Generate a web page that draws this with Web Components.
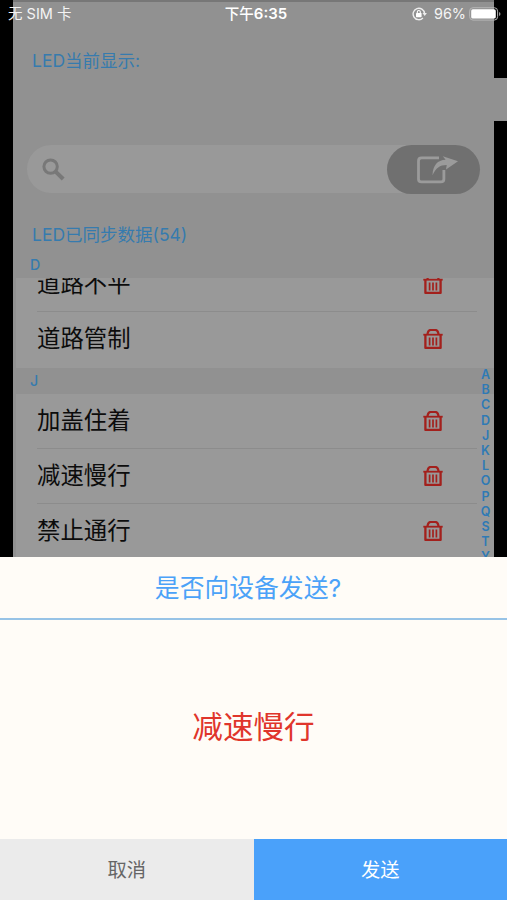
<!DOCTYPE html>
<html lang="zh-CN">
<head>
<meta charset="utf-8">
<title>LED</title>
<style>
html,body{margin:0;padding:0;width:507px;height:900px;overflow:hidden;background:#000;font-family:Inter,"Noto Sans CJK SC",sans-serif}
</style>
</head>
<body>
<led-app></led-app>
<script>
const define = (name, html, setup) => customElements.define(name, class extends HTMLElement {
  constructor() {
    super();
    this.attachShadow({mode: 'open'}).innerHTML = html;
  }
  connectedCallback() { if (setup) setup(this, this.shadowRoot); }
});

define('status-bar', `<style>
:host{position:absolute;inset:0 0 auto 0;height:28px;display:grid;grid-template-columns:1fr auto 1fr;align-items:center;padding:0 6px 0 8px;box-sizing:border-box;color:#f4f4f4;font-size:14.5px;line-height:28px;white-space:nowrap}
.time{font-weight:600;font-size:15px;color:#fff;padding-left:3px}
.time b{font-weight:500;font-size:14.5px}
.right{display:flex;align-items:center;justify-content:flex-end}
.pct{margin:0 3px 0 7px;font-size:14.4px}
svg{display:block;flex:none}
</style>
<span>无 SIM 卡</span><span class="time"><b>下午</b>6:35</span>
<span class="right">
<svg width="15" height="14" viewBox="0 0 15 14"><path d="M10.9 11A5.7 5.7 0 1 1 12.5 6.4" fill="none" stroke="#eee" stroke-width="1.4"/><path d="M10.5 6h4.4l-2.2 3z" fill="#eee"/><rect x="4" y="6" width="5.6" height="4.2" rx=".6" fill="#fff"/><path d="M5.3 6V5a1.5 1.5 0 0 1 3 0v1" fill="none" stroke="#fff" stroke-width="1.1"/></svg>
<span class="pct">96%</span>
<svg width="32" height="14" viewBox="0 0 32 14"><rect x=".6" y=".7" width="28" height="12.4" rx="3.4" fill="none" stroke="#b5b5b5" stroke-width="1"/><rect x="2.2" y="2.3" width="24.6" height="9.2" rx="1.6" fill="#fff"/><path d="M30 5v4q1.5-.5 1.5-2T30 5" fill="#999"/></svg>
</span>`);

define('trash-icon', `<style>:host{display:block;width:20px;height:21px}svg{display:block}</style>
<svg width="20" height="21" viewBox="0 0 20 21" fill="none" stroke="#a3201c"><path d="M.3 5.7h19.4" stroke-width="1.8"/><path d="M2.4 5.8v13.1h15.2V5.8" stroke-width="2.3" stroke-linejoin="round"/><path d="M4.6 5.3V4.4Q5.4 1 7.6 1h4.8q2.2 0 3 3.4v.9" stroke-width="2.2"/><path d="M6.6 8.4v8M10 8.4v8M13.4 8.4v8" stroke-width="1.7"/></svg>`);

define('message-row', `<style>
:host{display:block;height:55px;padding-left:21px;padding-right:17px;box-sizing:border-box;background:#999}
.in{height:100%;display:flex;align-items:center;justify-content:space-between;box-sizing:border-box;border-bottom:1px solid #8c8c8c;font-size:23.4px;line-height:54px;color:#0c0c0c;padding-right:34px}
:host([last]) .in{border-color:transparent}
</style><div class="in"><slot></slot><trash-icon></trash-icon></div>`);

define('section-head', `<style>
:host{display:block;height:26px;line-height:26px;padding-left:14px;background:#919191;color:#367bae;font-size:14.2px;font-weight:500}
</style><slot></slot>`);

define('search-bar', `<style>
:host{display:flex;height:48px;margin:0 14px 0 14px;border-radius:24px;background:#999;justify-content:space-between;align-items:center}
.go{width:93px;height:49px;border-radius:25px;background:#707070;display:flex;align-items:center;justify-content:center}
.find{margin-left:15px}
svg{display:block}
.go svg{margin-left:6px}
</style>
<svg class="find" width="23" height="23" viewBox="0 0 23 23" fill="none" stroke="#787878"><circle cx="8.6" cy="8.6" r="6.7" stroke-width="3"/><path d="m13.6 13.6 7.6 7.4" stroke-width="4"/></svg>
<span class="go"><svg width="44" height="30" viewBox="0 0 44 30"><path d="M24 3.9H6.5Q3.5 3.9 3.5 6.9v18q0 3 3 3h19.4q3 0 3-3v-9" fill="none" stroke="#9b9b9b" stroke-width="2.8"/><path d="M17.5 21.2C18 11 22.5 6.2 30.6 5.8L27.8 2.2 43 7.2 31 15.6l.7-4.6C24.6 11 21 14 17.5 21.2z" fill="#9b9b9b"/></svg></span>`);

define('letter-index', `<style>
:host{position:absolute;left:477px;top:367px;width:17px;height:190px;overflow:hidden;display:flex;flex-direction:column;align-items:center;color:#2f7ab5;font-size:12.5px;font-weight:600}
span{flex:none;height:15.2px;line-height:15.2px}
</style>`, (el, root) => {
  for (const c of 'ABCDJKLOPQSTY') {
    const s = document.createElement('span');
    s.textContent = c;
    root.append(s);
  }
});

define('led-screen', `<style>
:host{display:block;width:481px;height:557px;margin-left:13px;overflow:hidden;background:#919191;box-sizing:border-box;border-top:2px solid #777}
.label{display:block;padding-left:19px;color:#367bae;font-size:17.5px;line-height:26px}
.now{padding-top:46px;box-sizing:border-box;height:143px}
.sync{margin-top:29px;height:30px}
.list{margin-left:3px}
.clip{height:34px;overflow:hidden;display:flex;flex-direction:column;justify-content:flex-end}
.clip message-row{flex:none}
.gap{height:1px;background:#999}
</style>
<span class="label now">LED当前显示:</span>
<search-bar></search-bar>
<span class="label sync">LED已同步数据(54)</span>
<div class="list">
<section-head>D</section-head>
<div class="clip"><message-row>道路不平</message-row></div>
<message-row last>道路管制</message-row>
<div class="gap"></div>
<section-head>J</section-head>
<message-row>加盖住着</message-row>
<message-row>减速慢行</message-row>
<message-row last>禁止通行</message-row>
</div>`);

define('side-tab', `<style>:host{position:absolute;left:494px;top:78px;width:13px;height:43px;background:#919191}</style>`);

define('send-dialog', `<style>
:host{display:grid;grid-template-rows:63px 1fr 61px;height:343px;background:#fffcf7;text-align:center}
.title{box-sizing:border-box;border-bottom:2px solid #97c3e6;color:#4ba2f8;font-size:24.8px;line-height:63px;padding-right:11px;height:63px;white-space:nowrap}
.msg{color:#e0352b;font-size:30.6px;display:flex;align-items:center;justify-content:center;padding-bottom:10px}
.actions{display:grid;grid-template-columns:1fr 1fr;font-size:19.3px;line-height:63px;height:61px}
.no{background:#ebebeb;color:#666}
.yes{background:#4aa1fa;color:#fff}
</style>
<div class="title"><slot name="title"></slot></div>
<div class="msg"><slot></slot></div>
<div class="actions"><span class="no">取消</span><span class="yes">发送</span></div>`);

define('led-app', `<style>:host{display:block;position:relative;width:507px;height:900px;overflow:hidden;background:#000}</style>
<led-screen></led-screen><side-tab></side-tab><letter-index></letter-index><status-bar></status-bar>
<send-dialog><span slot="title">是否向设备发送?</span>减速慢行</send-dialog>`);
</script>
</body>
</html>
